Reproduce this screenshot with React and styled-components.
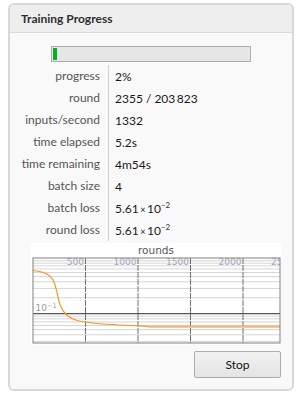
import styled, { createGlobalStyle } from "styled-components";

const ROWS = [
  { label: "progress", value: "2%" },
  { label: "round", value: "2355 / 203\u2009823" },
  { label: "inputs/second", value: "1332" },
  { label: "time elapsed", value: "5.2s" },
  { label: "time remaining", value: "4m54s" },
  { label: "batch size", value: "4" },
  { label: "batch loss", exp: "5.61" },
  { label: "round loss", exp: "5.61" },
];

const GlobalStyle = createGlobalStyle`
  body {
    margin: 0;
    padding: 3px 7px 0 8px;
    background: #ffffff;
    font-family: Lato, "Liberation Sans", sans-serif;
  }
`;

// chart geometry, in svg coordinates
const DECADE = 53;
const Y_TENTH = 56.7;
const X0 = 2;
const PX_PER_ROUND = 52.5 / 500;

const minorAbove = [2, 3, 4, 5, 6, 7, 8, 9].map((k) => Y_TENTH - DECADE * Math.log10(k));
const minorBelow = [2, 3, 4, 5, 6, 7, 8, 9].map((k) => Y_TENTH + DECADE * (1 - Math.log10(k)));

function LossChart() {
  const ticks = [500, 1000, 1500, 2000, 2500];
  return (
    <svg width="250" height="88" viewBox="0 0 250 88">
      <defs>
        <clipPath id="plot">
          <rect x="2" y="1" width="247" height="85" />
        </clipPath>
      </defs>
      <rect x="2" y="1" width="247" height="85" fill="#fff" />
      <g clipPath="url(#plot)">
        {[...minorAbove, ...minorBelow, Y_TENTH - DECADE].map((y, i) => (
          <line key={i} x1="2" x2="249" y1={y} y2={y} stroke="#d6d6d6" strokeWidth="1" />
        ))}
        <line x1="2" x2="249" y1={Y_TENTH} y2={Y_TENTH} stroke="#555" strokeWidth="1.2" />
        {ticks.map((t) => {
          const x = X0 + t * PX_PER_ROUND;
          return (
            <g key={t}>
              <line x1={x} x2={x} y1="1" y2="86" stroke="#707070" strokeWidth="1" strokeDasharray="6 1" />
              <text
                x={x - 1.5}
                y="8"
                textAnchor="end"
                fontFamily="DejaVu Sans, sans-serif"
                fontSize="9"
                fill="#9ea6be"
              >
                {t}
              </text>
            </g>
          );
        })}
        <text x="4.5" y="54" fontFamily="DejaVu Sans, sans-serif" fontSize="9" fill="#9a9a9a">
          10
          <tspan dy="-3" fontSize="6.5">
            −1
          </tspan>
        </text>
        <path
          d="M2,13.5 C10,14.5 18,16 22,23 C26,30 27,44 30,50 C33,57 38,61 46,63.5 C56,66 70,67.7 117,69.3"
          fill="none"
          stroke="#f7941d"
          strokeWidth="1.2"
        />
        <path d="M117,69.6 L249,69.6" fill="none" stroke="#f6b57a" strokeWidth="2.4" />
      </g>
      <rect x="2" y="1" width="247" height="85" fill="none" stroke="#808080" strokeWidth="1" />
    </svg>
  );
}

export default function App() {
  return (
    <>
      <GlobalStyle />
      <Panel>
        <Header>Training Progress</Header>
        <Body>
          <ProgressTrack>
            <ProgressFill style={{ width: "2%" }} />
          </ProgressTrack>
          <Stats>
            {ROWS.map((row) => (
              <Row key={row.label}>
                <Label>{row.label}</Label>
                <Value>
                  {row.exp ? (
                    <>
                      {row.exp}
                      <Times>×</Times>10<Sup>−2</Sup>
                    </>
                  ) : (
                    row.value
                  )}
                </Value>
              </Row>
            ))}
          </Stats>
          <ChartBox>
            <ChartTitle>rounds</ChartTitle>
            <LossChart />
          </ChartBox>
          <Actions>
            <Button>Stop</Button>
          </Actions>
        </Body>
      </Panel>
    </>
  );
}

const Panel = styled.div`
  width: 286px;
  height: 388px;
  box-sizing: border-box;
  border: 2px solid #d8d8d8;
  border-radius: 6px;
  background: #f9f9f9;
  overflow: hidden;
  display: flex;
  flex-direction: column;
`;

const Header = styled.div`
  height: 27px;
  line-height: 28px;
  padding-left: 11px;
  background: #eeeeee;
  border-bottom: 1px solid #dcdcdc;
  font-size: 12px;
  font-weight: 700;
  color: #2e2e2e;
`;

const Body = styled.div`
  display: flex;
  flex-direction: column;
`;

const ProgressTrack = styled.div`
  margin: 13px 0 0 41px;
  width: 200px;
  height: 16px;
  box-sizing: border-box;
  border: 1px solid #adadad;
  background: #e6e6e6;
  padding: 1px;
  display: flex;
`;

const ProgressFill = styled.div`
  height: 100%;
  min-width: 4px;
  background: #06b025;
`;

const Stats = styled.div`
  margin-top: 3px;
  display: flex;
  flex-direction: column;
`;

const Row = styled.div`
  display: grid;
  grid-template-columns: 99px 1fr;
  height: 22px;
  align-items: center;
  font-size: 12px;
`;

const Label = styled.div`
  height: 100%;
  line-height: 22px;
  text-align: right;
  padding-right: 8px;
  color: #555555;
  border-right: 1px solid #d0d0d0;
`;

const Value = styled.div`
  padding-left: 6px;
  color: #1a1a1a;
`;

const Times = styled.span`
  font-size: 9px;
  margin: 0 1.5px;
`;

const Sup = styled.sup`
  font-size: 8px;
  line-height: 0;
  color: #333;
`;

const ChartBox = styled.div`
  margin: 2px 0 0 21px;
  width: 250px;
  height: 102px;
  background: #ffffff;
  display: flex;
  flex-direction: column;
`;

const ChartTitle = styled.div`
  height: 14px;
  line-height: 15px;
  text-align: center;
  font-family: "DejaVu Sans", sans-serif;
  font-size: 10.5px;
  color: #555555;
`;

const Actions = styled.div`
  display: flex;
  justify-content: flex-end;
  padding-right: 11px;
  margin-top: 6px;
`;

const Button = styled.button`
  width: 87px;
  height: 27px;
  border: 1px solid #adadad;
  border-radius: 2px;
  background: linear-gradient(#f2f2f2, #e4e4e4);
  font-family: Lato, "Liberation Sans", sans-serif;
  font-size: 12px;
  color: #111;
  padding: 0;
`;
